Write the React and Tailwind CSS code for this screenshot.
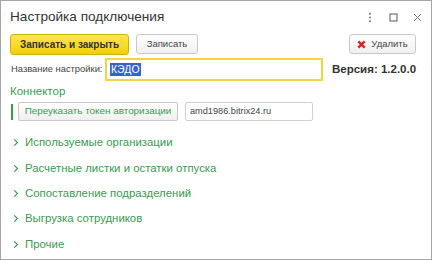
import React from 'react';

const groups = [
  'Используемые организации',
  'Расчетные листки и остатки отпуска',
  'Сопоставление подразделений',
  'Выгрузка сотрудников',
  'Прочие',
];

function Chevron() {
  return (
    <svg width="6" height="9" viewBox="0 0 6 9" className="shrink-0">
      <path d="M1.3 1.3 L4.5 4.5 L1.3 7.7" fill="none" stroke="#3b9a52" strokeWidth="1.2" />
    </svg>
  );
}

export default function App() {
  return (
    <div
      className="w-[432px] h-[260px] bg-white border border-[#a6a6a6] text-[#333] overflow-hidden whitespace-nowrap"
      style={{ fontFamily: '"Liberation Sans", Arial, sans-serif' }}
    >
      {/* header */}
      <div className="flex items-center justify-between h-[30px] pl-[9px] pr-[9px] pt-[2px]">
        <span className="text-[13.6px] text-[#333]">Настройка подключения</span>
        <div className="flex items-center gap-[13px]">
          <svg width="4" height="11" viewBox="0 0 4 11">
            <circle cx="2" cy="1.8" r="1" fill="#777" />
            <circle cx="2" cy="5.5" r="1" fill="#777" />
            <circle cx="2" cy="9.2" r="1" fill="#777" />
          </svg>
          <svg width="9" height="9" viewBox="0 0 9 9" className="ml-[4px]">
            <rect x="1" y="1" width="7" height="7" fill="none" stroke="#666" strokeWidth="1.1" />
          </svg>
          <svg width="9" height="9" viewBox="0 0 9 9" className="ml-[2px]">
            <path d="M1 1 L8 8 M8 1 L1 8" stroke="#777" strokeWidth="1" />
          </svg>
        </div>
      </div>

      {/* toolbar */}
      <div className="flex items-center h-[22px] mt-[2px] px-[9px]">
        <button className="h-[21px] w-[119px] rounded-[3px] border border-[#d4b300] bg-gradient-to-b from-[#ffe54a] to-[#f3cf00] text-[10px] font-bold text-[#333]">
          Записать и закрыть
        </button>
        <button className="ml-[7px] h-[20px] w-[62px] rounded-[3px] border border-[#c8c8c8] bg-gradient-to-b from-white to-[#f0f0f0] text-[9.5px] text-[#444]">
          Записать
        </button>
        <button className="ml-auto mr-[6px] h-[20px] w-[67px] rounded-[3px] border border-[#c8c8c8] bg-gradient-to-b from-white to-[#f0f0f0] text-[9.5px] text-[#444] flex items-center justify-center gap-[5px]">
          <svg width="9" height="9" viewBox="0 0 9 9">
            <path d="M1.3 1.3 L7.7 7.7 M7.7 1.3 L1.3 7.7" stroke="#e02020" strokeWidth="2.4" />
          </svg>
          Удалить
        </button>
      </div>

      {/* name row */}
      <div className="flex items-center h-[23px] mt-[3px] pl-[10px]">
        <span className="text-[9.4px] text-[#444] w-[94px]">Название настройки:</span>
        <div className="h-[23px] w-[218px] border-2 border-[#f1d544] bg-white flex items-center pl-[3px]">
          <span className="text-[10.5px] leading-[13px] bg-[#3564c8] text-white px-[1px]">КЭДО</span>
        </div>
        <span className="ml-[9px] text-[11.5px] font-bold text-[#333]">Версия: 1.2.0.0</span>
      </div>

      {/* connector */}
      <div className="pl-[9px] mt-[3px] text-[11.5px] text-[#3b9a52] leading-[14px]">Коннектор</div>
      <div className="flex items-center mt-[4px] pl-[10px] h-[19px]">
        <div className="w-[2px] h-[16px] bg-[#3b9a52]" />
        <button className="ml-[5px] h-[19px] w-[160px] rounded-[2px] border border-[#c8c8c8] bg-gradient-to-b from-white to-[#efefef] text-[9.9px] text-[#3b9a52]">
          Переуказать токен авторизации
        </button>
        <div className="ml-[7px] h-[19px] w-[128px] rounded-[2px] border border-[#d0d0d0] flex items-center pl-[4px] text-[9.2px] text-[#444]">
          amd1986.bitrix24.ru
        </div>
      </div>

      {/* groups */}
      <div className="flex flex-col mt-[9px] pl-[12px]">
        {groups.map((g) => (
          <div key={g} className="flex items-center gap-[6px] h-[25.4px] text-[11.4px] text-[#3b9a52]">
            <Chevron />
            <span>{g}</span>
          </div>
        ))}
      </div>
    </div>
  );
}
